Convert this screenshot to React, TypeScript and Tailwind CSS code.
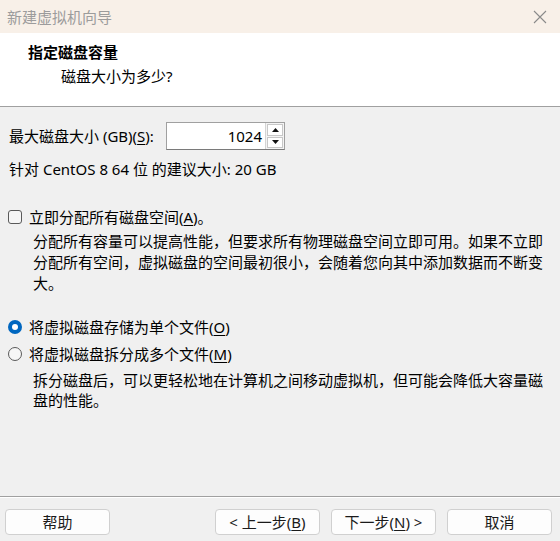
import React from "react";

const U = ({ children }: { children: React.ReactNode }) => (
  <span className="underline underline-offset-2">{children}</span>
);

function Btn({ children, className = "" }: { children: React.ReactNode; className?: string }) {
  return (
    <div
      className={`h-[26px] w-[105px] flex items-center justify-center rounded-[4px] border border-[#d0d0d0] bg-[#fdfdfd] text-[15px] text-[#1a1a1a] ${className}`}
    >
      {children}
    </div>
  );
}

export default function App() {
  return (
    <div
      className="w-[560px] h-[541px] bg-[#f0f0f0] flex flex-col text-[15px] text-black overflow-hidden"
      style={{ fontFamily: '"Noto Sans", "Noto Sans CJK SC", sans-serif' }}
    >
      {/* title bar */}
      <div className="h-[33px] bg-[#f8f0e8] flex items-center justify-between pl-[7px] pr-[13px]">
        <span className="text-[15px] text-[#9c9c9c] leading-[20px]">新建虚拟机向导</span>
        <svg width="14" height="14" viewBox="0 0 14 14" className="text-[#8a8a8a]">
          <path d="M1 1 L13 13 M13 1 L1 13" stroke="currentColor" strokeWidth="1.1" fill="none" />
        </svg>
      </div>

      {/* header */}
      <div className="h-[73px] bg-white pt-[9px] pl-[28px]">
        <div className="leading-[20px] font-bold">指定磁盘容量</div>
        <div className="leading-[20px] mt-[4px] pl-[33px]">磁盘大小为多少?</div>
      </div>
      <div className="h-px bg-[#a0a0a0]" />

      {/* content */}
      <div className="flex-1 flex flex-col pl-[9px] pr-[10px]">
        <div className="mt-[15px] h-[28px] flex items-center">
          <span className="leading-[20px] w-[157px]">
            最大磁盘大小 (GB)(<U>S</U>):
          </span>
          <div className="h-[28px] w-[119px] flex bg-white border border-[#a0a0a0] border-b-[#7a7a7a]">
            <div className="flex-1 flex items-center justify-end pr-[3px] leading-[20px]">1024</div>
            <div className="w-[19px] flex flex-col border-l border-[#d4d4d4] p-[1px] gap-px bg-[#f4f4f4]">
              <div className="flex-1 flex items-center justify-center bg-white border border-[#c8c8c8]">
                <svg width="7" height="4" viewBox="0 0 7 4"><path d="M3.5 0 L7 4 L0 4 Z" fill="#111" /></svg>
              </div>
              <div className="flex-1 flex items-center justify-center bg-white border border-[#c8c8c8]">
                <svg width="7" height="4" viewBox="0 0 7 4"><path d="M0 0 L7 0 L3.5 4 Z" fill="#111" /></svg>
              </div>
            </div>
          </div>
        </div>

        <div className="mt-[9px] leading-[20px]">针对 CentOS 8 64 位 的建议大小: 20 GB</div>

        <div className="mt-[28px] h-[20px] flex items-center">
          <div className="w-[14px] h-[14px] rounded-[3px] border border-[#5a5a5a] bg-[#f6f6f6] ml-[-1px]" />
          <span className="ml-[7px] leading-[20px]">
            立即分配所有磁盘空间(<U>A</U>)。
          </span>
        </div>
        <div className="mt-[4px] pl-[24px] leading-[21px]">
          分配所有容量可以提高性能，但要求所有物理磁盘空间立即可用。如果不立即分配所有空间，虚拟磁盘的空间最初很小，会随着您向其中添加数据而不断变大。
        </div>

        <div className="mt-[23px] h-[20px] flex items-center">
          <div className="w-[14px] h-[14px] rounded-full bg-[#0067c0] flex items-center justify-center ml-[-1px]">
            <div className="w-[6px] h-[6px] rounded-full bg-white" />
          </div>
          <span className="ml-[7px] leading-[20px]">
            将虚拟磁盘存储为单个文件(<U>O</U>)
          </span>
        </div>
        <div className="mt-[7px] h-[20px] flex items-center">
          <div className="w-[14px] h-[14px] rounded-full border border-[#5a5a5a] bg-[#f6f6f6] ml-[-1px]" />
          <span className="ml-[7px] leading-[20px]">
            将虚拟磁盘拆分成多个文件(<U>M</U>)
          </span>
        </div>
        <div className="mt-[6px] pl-[24px] leading-[20px]">
          拆分磁盘后，可以更轻松地在计算机之间移动虚拟机，但可能会降低大容量磁盘的性能。
        </div>
      </div>

      {/* footer */}
      <div className="h-px bg-[#a0a0a0]" />
      <div className="h-px bg-white" />
      <div className="h-[43px] flex items-start pt-[11px] pl-[5px] pr-[8px]">
        <Btn>帮助</Btn>
        <div className="flex-1" />
        <Btn>
          &lt; 上一步(<U>B</U>)
        </Btn>
        <Btn className="ml-[11px]">
          下一步(<U>N</U>) &gt;
        </Btn>
        <Btn className="ml-[11px]">取消</Btn>
      </div>
    </div>
  );
}
